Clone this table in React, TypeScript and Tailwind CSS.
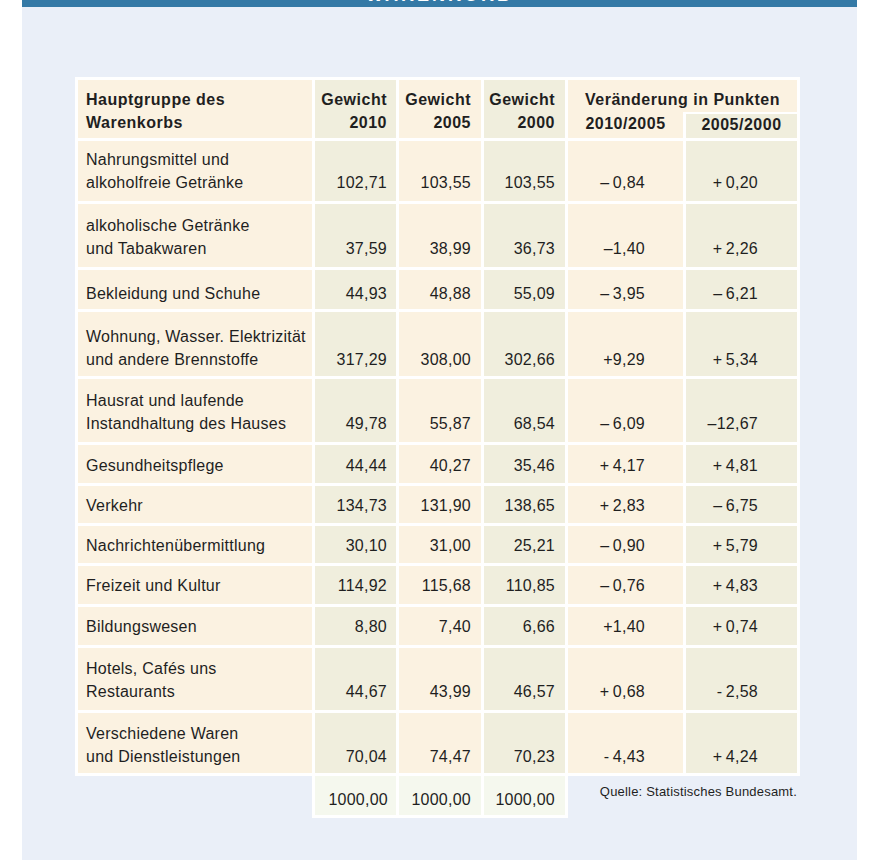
const CREAM = "bg-[#fbf2e1]";
const OLIVE = "bg-[#f0eedd]";

type Row = {
  label: string;
  h: string;
  w2010: string;
  w2005: string;
  w2000: string;
  d1: string;
  d2: string;
};

const T = "\u2009";

// heights (and a couple of nudges) follow the printed table, which isn't perfectly regular
const ROWS: Row[] = [
  { label: "Nahrungsmittel und\nalkoholfreie Getränke", h: "h-[60px]", w2010: "102,71", w2005: "103,55", w2000: "103,55", d1: `–${T}0,84`, d2: `+${T}0,20` },
  { label: "alkoholische Getränke\nund Tabakwaren", h: "h-[63px] pt-[2px]", w2010: "37,59", w2005: "38,99", w2000: "36,73", d1: "–1,40", d2: `+${T}2,26` },
  { label: "Bekleidung und Schuhe", h: "h-[39px] pt-[7px]", w2010: "44,93", w2005: "48,88", w2000: "55,09", d1: `–${T}3,95`, d2: `–${T}6,21` },
  { label: "Wohnung, Wasser. Elektrizität\nund andere Brennstoffe", h: "h-[64px] pt-[8px]", w2010: "317,29", w2005: "308,00", w2000: "302,66", d1: "+9,29", d2: `+${T}5,34` },
  { label: "Hausrat und laufende\nInstandhaltung des Hauses", h: "h-[63px] pt-[2px]", w2010: "49,78", w2005: "55,87", w2000: "68,54", d1: `–${T}6,09`, d2: "–12,67" },
  { label: "Gesundheitspflege", h: "h-[38px] pt-[2px]", w2010: "44,44", w2005: "40,27", w2000: "35,46", d1: `+${T}4,17`, d2: `+${T}4,81` },
  { label: "Verkehr", h: "h-[37px] pt-[2px]", w2010: "134,73", w2005: "131,90", w2000: "138,65", d1: `+${T}2,83`, d2: `–${T}6,75` },
  { label: "Nachrichtenübermittlung", h: "h-[37px] pt-[2px]", w2010: "30,10", w2005: "31,00", w2000: "25,21", d1: `–${T}0,90`, d2: `+${T}5,79` },
  { label: "Freizeit und Kultur", h: "h-[38px] pt-[1px]", w2010: "114,92", w2005: "115,68", w2000: "110,85", d1: `–${T}0,76`, d2: `+${T}4,83` },
  { label: "Bildungswesen", h: "h-[38px]", w2010: "8,80", w2005: "7,40", w2000: "6,66", d1: "+1,40", d2: `+${T}0,74` },
  { label: "Hotels, Cafés uns\nRestaurants", h: "h-[62px] pt-[2px]", w2010: "44,67", w2005: "43,99", w2000: "46,57", d1: `+${T}0,68`, d2: `-${T}2,58` },
  { label: "Verschiedene Waren\nund Dienstleistungen", h: "h-[60px] pt-[4px]", w2010: "70,04", w2005: "74,47", w2000: "70,23", d1: `-${T}4,43`, d2: `+${T}4,24` },
];

function BodyRow({ row }: { row: Row }) {
  const double = row.label.includes("\n");
  // values sit on the label's last line
  const cell = (bg: string, pr: string, text: string) => (
    <div className={`${bg} ${row.h} flex flex-col items-end justify-center ${pr}`}>
      {double && <span className="invisible">&nbsp;</span>}
      <span>{text}</span>
    </div>
  );
  return (
    <>
      <div className={`${CREAM} ${row.h} flex items-center whitespace-pre-line pl-2`}>{row.label}</div>
      {cell(OLIVE, "pr-[9px]", row.w2010)}
      {cell(CREAM, "pr-[10px]", row.w2005)}
      {cell(OLIVE, "pr-[10px]", row.w2000)}
      {cell(CREAM, "pr-[38px]", row.d1)}
      {cell(OLIVE, "pr-[39px]", row.d2)}
    </>
  );
}

export default function App() {
  return (
    <div className="h-[860px] w-[886px] overflow-hidden bg-white font-['Liberation_Sans',Arial,sans-serif] text-[16px] leading-[23px] tracking-[0.25px] text-[#1f1f1f]">
      <div className="ml-[22px] flex h-full w-[835px] flex-col">
        {/* title bar — only the bottom of the heading is in view */}
        <div className="flex h-[7px] justify-center overflow-hidden bg-[#3479a6]">
          <span className="-mt-[14px] text-[18px] font-bold leading-[18px] tracking-[3px] text-white">WARENKORB</span>
        </div>

        <div className="flex-1 bg-[#eaeff8] pl-[53px] pt-[70px]">
          <div className="grid w-[725px] grid-cols-[234px_81px_82px_81px_115px_111px] gap-[3px] bg-white p-[3px]">
            <div className={`${CREAM} h-[58px] pl-2 pt-[8px] font-bold tracking-[0.5px]`}>
              Hauptgruppe des
              <br />
              Warenkorbs
            </div>
            <div className={`${OLIVE} pr-[9px] pt-[8px] text-right font-bold tracking-[0.5px]`}>
              Gewicht
              <br />
              2010
            </div>
            <div className={`${CREAM} pr-[10px] pt-[8px] text-right font-bold tracking-[0.5px]`}>
              Gewicht
              <br />
              2005
            </div>
            <div className={`${OLIVE} pr-[10px] pt-[8px] text-right font-bold tracking-[0.5px]`}>
              Gewicht
              <br />
              2000
            </div>
            <div className={`${CREAM} col-span-2 flex flex-col font-bold tracking-[0.5px]`}>
              <div className="h-[32px] pt-[8px] text-center">Veränderung in Punkten</div>
              <div className="flex flex-1">
                <div className="w-[115px] text-center leading-[24px]">2010/2005</div>
                <div className="flex flex-1 bg-white pl-[3px] pt-[2px]">
                  <div className={`${OLIVE} flex-1 text-center leading-[22px]`}>2005/2000</div>
                </div>
              </div>
            </div>

            {ROWS.map((row) => (
              <BodyRow key={row.label} row={row} />
            ))}
          </div>

          <div className="flex w-[725px]">
            <div className="w-[237px]" />
            <div className="flex gap-[3px] bg-white px-[3px] pb-[3px]">
              <div className="flex h-[39px] w-[81px] items-end justify-end bg-[#f5f8ee] pb-[4px] pr-[8px]">1000,00</div>
              <div className="flex h-[39px] w-[82px] items-end justify-end bg-[#f5f8ee] pb-[4px] pr-[10px]">1000,00</div>
              <div className="flex h-[39px] w-[81px] items-end justify-end bg-[#f5f8ee] pb-[4px] pr-[10px]">1000,00</div>
            </div>
            <div className="flex-1 pr-[3px] pt-[8px] text-right text-[13px] leading-[16px] tracking-[0.2px]">
              Quelle: Statistisches Bundesamt.
            </div>
          </div>
        </div>
      </div>
    </div>
  );
}
